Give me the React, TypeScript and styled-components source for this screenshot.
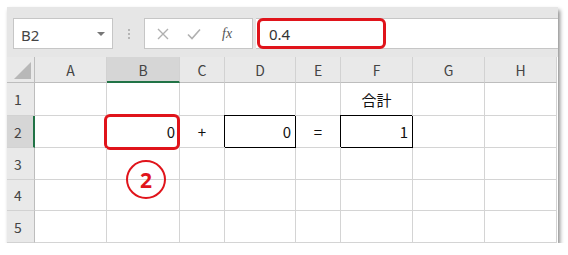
import { Fragment } from 'react';
import styled, { createGlobalStyle } from 'styled-components';

const GlobalStyle = createGlobalStyle`
  * { box-sizing: border-box; }
  body {
    margin: 0;
    background: #ffffff;
    font-family: "Noto Sans", "Noto Sans CJK JP", sans-serif;
  }
`;

const Page = styled.div`
  padding: 7px 0 0 7px;
`;

const Frame = styled.div`
  width: 551px;
  height: 236px;
  background: #ffffff;
  box-shadow: 2px 3px 4px rgba(0, 0, 0, 0.45);
  display: flex;
  flex-direction: column;
`;

// 上の数式バー
const Toolbar = styled.div`
  height: 50px;
  background: #e6e6e6;
  display: flex;
  align-items: flex-start;
  padding-top: 11px;
`;

const NameBox = styled.div`
  margin-left: 6px;
  width: 100px;
  height: 31px;
  background: #fff;
  border: 1px solid #c6c6c6;
  display: flex;
  align-items: center;
  justify-content: space-between;
  padding: 2px 7px 0 7px;
  font-size: 15px;
  color: #444;
`;

const Caret = styled.span`
  width: 0;
  height: 0;
  border-left: 4px solid transparent;
  border-right: 4px solid transparent;
  border-top: 4px solid #777;
  margin-top: -1px;
`;

const Grip = styled.div`
  width: 31px;
  height: 31px;
  display: flex;
  flex-direction: column;
  align-items: center;
  justify-content: center;
  gap: 2px;
  & > span {
    width: 2px;
    height: 2px;
    background: #b5b5b5;
  }
`;

const FxButtons = styled.div`
  width: 109px;
  height: 31px;
  background: #fff;
  border: 1px solid #c6c6c6;
  display: flex;
  align-items: center;
  padding-left: 12px;
  gap: 18px;
`;

const FxLabel = styled.span`
  font-family: "Liberation Serif", serif;
  font-style: italic;
  font-size: 14px;
  color: #555;
  margin-left: 3px;
`;

const FormulaInput = styled.div`
  position: relative;
  margin-left: 3px;
  flex: 1;
  height: 31px;
  background: #fff;
  border-top: 1px solid #c6c6c6;
  border-bottom: 1px solid #c6c6c6;
  display: flex;
  align-items: center;
  padding: 1px 0 0 13px;
  font-size: 15px;
  color: #333;
`;

const RedBox = styled.div<{ w: number }>`
  position: absolute;
  left: 1px;
  top: -1px;
  width: ${(p) => p.w}px;
  height: 31px;
  border: 3px solid #e0141b;
  border-radius: 6px;
`;

// シート部分
const Sheet = styled.div`
  position: relative;
  display: grid;
  grid-template-columns: 28px 72px 73px 45px 71px 45px 72px 72px 72px;
  grid-template-rows: 26px 33px 32px 32px 31px 32px;
  font-family: "Noto Sans CJK JP", "Noto Sans", sans-serif;
`;

const Corner = styled.div`
  background: #e9e9e9;
  border-right: 1px solid #bdbdbd;
  border-bottom: 1px solid #bdbdbd;
  position: relative;
  &::after {
    content: '';
    position: absolute;
    right: 3px;
    bottom: 3px;
    border-left: 17px solid transparent;
    border-bottom: 17px solid #b8b8b8;
  }
`;

const ColHead = styled.div<{ active?: boolean }>`
  background: ${(p) => (p.active ? '#d6d6d6' : '#e9e9e9')};
  border-right: 1px solid #d2d2d2;
  border-bottom: ${(p) => (p.active ? '2px solid #217346' : '1px solid #bdbdbd')};
  display: flex;
  align-items: center;
  justify-content: center;
  font-size: 14px;
  color: #444;
  padding-top: ${(p) => (p.active ? '1px' : '0')};
`;

const RowHead = styled.div<{ active?: boolean }>`
  background: ${(p) => (p.active ? '#d6d6d6' : '#e9e9e9')};
  border-right: ${(p) => (p.active ? '2px solid #217346' : '1px solid #bdbdbd')};
  border-bottom: 1px solid #d2d2d2;
  display: flex;
  align-items: center;
  padding-left: 7px;
  font-size: 14px;
  color: #444;
`;

const Cell = styled.div<{ align?: 'left' | 'center' | 'right'; boxed?: boolean }>`
  position: relative;
  border-right: ${(p) => (p.boxed ? '1px solid #000' : '1px solid #d4d4d4')};
  border-bottom: ${(p) => (p.boxed ? '1px solid #000' : '1px solid #d4d4d4')};
  ${(p) => (p.boxed ? 'box-shadow: -1px -1px 0 #000;' : '')}
  display: flex;
  align-items: center;
  justify-content: ${(p) =>
    p.align === 'right' ? 'flex-end' : p.align === 'center' ? 'center' : 'flex-start'};
  padding: 0 4px;
  font-size: 15px;
  color: #111;
`;

const CellMark = styled.div`
  position: absolute;
  left: -3px;
  top: -2px;
  right: -1px;
  bottom: -3px;
  border: 3px solid #e0141b;
  border-radius: 6px;
`;

const StepBadge = styled.div`
  position: absolute;
  left: 119px;
  top: 103px;
  width: 40px;
  height: 39px;
  border: 2.5px solid #e0141b;
  border-radius: 50%;
  display: flex;
  align-items: center;
  justify-content: center;
  color: #e0141b;
  font-family: "Noto Sans", sans-serif;
  font-weight: 700;
  font-size: 21px;
`;

const cols = ['A', 'B', 'C', 'D', 'E', 'F', 'G', 'H'];

type CellData = { text?: string; align?: 'left' | 'center' | 'right'; boxed?: boolean; mark?: boolean };

const data: Record<string, CellData> = {
  F1: { text: '合計', align: 'center' },
  B2: { text: '0', align: 'right', mark: true },
  C2: { text: '+', align: 'center' },
  D2: { text: '0', align: 'right', boxed: true },
  E2: { text: '=', align: 'center' },
  F2: { text: '1', align: 'right', boxed: true },
};

function XIcon() {
  return (
    <svg width="12" height="12" viewBox="0 0 12 12">
      <path d="M1 1L11 11M11 1L1 11" stroke="#b0b0b0" strokeWidth="1.4" fill="none" />
    </svg>
  );
}

function CheckIcon() {
  return (
    <svg width="14" height="12" viewBox="0 0 14 12">
      <path d="M1 6.5L5 10.5L13 1.5" stroke="#b0b0b0" strokeWidth="1.6" fill="none" />
    </svg>
  );
}

function App() {
  return (
    <Page>
      <GlobalStyle />
      <Frame>
        <Toolbar>
          <NameBox>
            B2
            <Caret />
          </NameBox>
          <Grip>
            <span />
            <span />
            <span />
          </Grip>
          <FxButtons>
            <XIcon />
            <CheckIcon />
            <FxLabel>fx</FxLabel>
          </FxButtons>
          <FormulaInput>
            0.4
            <RedBox w={129} />
          </FormulaInput>
        </Toolbar>
        <Sheet>
          <Corner />
          {cols.map((c) => (
            <ColHead key={c} active={c === 'B'}>
              {c}
            </ColHead>
          ))}
          {[1, 2, 3, 4, 5].map((r) => (
            <Fragment key={r}>
              <RowHead active={r === 2}>{r}</RowHead>
              {cols.map((c) => {
                const d = data[c + r];
                return (
                  <Cell key={c + r} align={d?.align} boxed={d?.boxed}>
                    {d?.text}
                    {d?.mark && <CellMark />}
                  </Cell>
                );
              })}
            </Fragment>
          ))}
          <StepBadge>2</StepBadge>
        </Sheet>
      </Frame>
    </Page>
  );
}

export default App;
